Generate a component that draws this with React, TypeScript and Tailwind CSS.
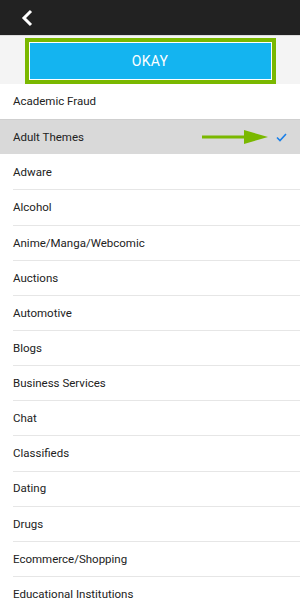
const categories = [
  "Academic Fraud",
  "Adult Themes",
  "Adware",
  "Alcohol",
  "Anime/Manga/Webcomic",
  "Auctions",
  "Automotive",
  "Blogs",
  "Business Services",
  "Chat",
  "Classifieds",
  "Dating",
  "Drugs",
  "Ecommerce/Shopping",
  "Educational Institutions",
];

const selected = "Adult Themes";

function Arrow() {
  return (
    <svg width="66" height="16" viewBox="0 0 66 16" className="mr-[8px]">
      <rect x="0" y="6.5" width="44" height="3" fill="#7ab800" />
      <polygon points="42,1 66,8 42,15" fill="#7ab800" />
    </svg>
  );
}

function Check() {
  return (
    <svg width="11" height="9" viewBox="0 0 11 9">
      <path d="M1 4.5 L4 7.5 L10 1" fill="none" stroke="#1a7fe8" strokeWidth="1.6" />
    </svg>
  );
}

export default function App() {
  return (
    <div className="w-[300px] h-[604px] overflow-hidden bg-white font-['Roboto',sans-serif]">
      <header className="h-[35px] bg-[#222222] flex items-center pl-[20px] border-b border-[#dcdcdc] box-content">
        <svg width="14" height="18" viewBox="0 0 14 18">
          <path d="M11 2 L4 9 L11 16" fill="none" stroke="#ffffff" strokeWidth="3" />
        </svg>
      </header>
      <div className="bg-[#f4f4f4] h-[48px] pt-[2px] flex justify-center">
        <div className="w-[251px] h-[46px] border-[4px] border-[#7ab800] p-[1px] bg-white">
          <button
            type="button"
            className="w-full h-full bg-[#14b4f0] text-white text-[14px] tracking-[0.3px]"
          >
            OKAY
          </button>
        </div>
      </div>
      <ul>
        {categories.map((c, i) => {
          const isSel = c === selected;
          return (
            <li
              key={c}
              className={
                isSel
                  ? "h-[35.15px] bg-[#d9d9d9] border-t border-[#cfcfcf] flex items-center pl-[13px] pr-[13px]"
                  : "h-[35.15px] pl-[13px]"
              }
            >
              {isSel ? (
                <>
                  <span className="flex-1 text-[11.5px] text-[#222222] pt-[1px]">{c}</span>
                  <Arrow />
                  <Check />
                </>
              ) : (
                <div
                  className={
                    i === 0 || categories[i - 1] === selected
                      ? "h-full flex items-center pt-[1px] text-[11.5px] text-[#222222]"
                      : "h-full flex items-center pt-[1px] border-t border-[#e6e6e6] text-[11.5px] text-[#222222]"
                  }
                >
                  {c}
                </div>
              )}
            </li>
          );
        })}
      </ul>
    </div>
  );
}
